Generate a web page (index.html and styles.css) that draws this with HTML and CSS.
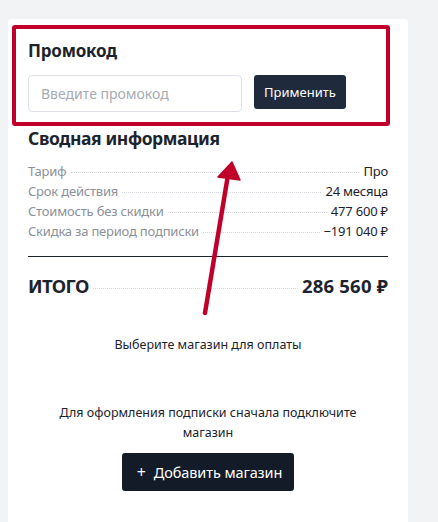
FILE: index.html
```html
<!DOCTYPE html>
<html lang="ru">
<head>
<meta charset="utf-8">
<link rel="stylesheet" href="styles.css">
</head>
<body>
<div class="card">
  <section class="promo">
    <h2 class="promo-title">Промокод</h2>
    <div class="promo-row">
      <input class="promo-input" type="text" placeholder="Введите промокод">
      <button class="btn btn-apply">Применить</button>
    </div>
  </section>

  <h2 class="summary-title">Сводная информация</h2>
  <div class="rows">
    <div class="row"><span class="label">Тариф</span><span class="dots"></span><span class="value">Про</span></div>
    <div class="row"><span class="label">Срок действия</span><span class="dots"></span><span class="value">24 месяца</span></div>
    <div class="row"><span class="label">Стоимость без скидки</span><span class="dots"></span><span class="value">477 600 ₽</span></div>
    <div class="row"><span class="label">Скидка за период подписки</span><span class="dots"></span><span class="value">−191 040 ₽</span></div>
  </div>
  <div class="total">
    <span class="total-label">ИТОГО</span><span class="dots"></span><span class="total-value">286 560 ₽</span>
  </div>

  <p class="choose">Выберите магазин для оплаты</p>
  <p class="hint">Для оформления подписки сначала подключите магазин</p>
  <div class="add-wrap">
    <button class="btn btn-add"><span class="plus">+</span>Добавить магазин</button>
  </div>

  <svg class="arrow" width="60" height="180" viewBox="0 0 60 180">
    <line x1="11" y1="172" x2="34" y2="34" stroke="#c0002a" stroke-width="4.5" stroke-linecap="round"/>
    <polygon points="38,21 24,36 46,39" fill="#c0002a" stroke="#c0002a" stroke-width="1.5" stroke-linejoin="round"/>
  </svg>
</div>
</body>
</html>
```

FILE: styles.css
```css
html, body {
  margin: 0;
  padding: 0;
}
body {
  background: #f2f3f5;
  font-family: "Noto Sans", "Open Sans", sans-serif;
  color: #1d232d;
  height: 522px;
  overflow: hidden;
}
.card {
  position: relative;
  margin: 19px 0 0 8px;
  width: 400px;
  min-height: 520px;
  box-sizing: border-box;
  background: #fff;
  border-radius: 3px;
  padding: 6px 20px 20px 20px;
}
.promo {
  margin: 0 -2px 0 -16px;
  border: 4px solid #c0002a;
  border-radius: 3px;
  padding: 10px 12px 10px 12px;
}
.promo-title {
  margin: 0;
  font-size: 17px;
  line-height: 24px;
  font-weight: 700;
  letter-spacing: -0.2px;
  color: #1d232d;
}
.promo-row {
  display: flex;
  align-items: flex-start;
  gap: 12px;
  margin-top: 12px;
}
.promo-input {
  width: 214px;
  height: 37px;
  box-sizing: border-box;
  border: 1px solid #dde1e7;
  border-radius: 4px;
  padding: 0 12px;
  font-family: inherit;
  font-size: 14px;
  color: #1d232d;
  outline: none;
}
.promo-input::placeholder {
  color: #a6abb3;
}
.btn {
  border: none;
  font-family: inherit;
  color: #fff;
  cursor: pointer;
}
.btn-apply {
  height: 34px;
  width: 92px;
  padding: 0;
  background: #1f2a3c;
  border-radius: 3px;
  font-size: 13px;
}
.summary-title {
  margin: 0;
  font-size: 17.5px;
  line-height: 24px;
  font-weight: 700;
  letter-spacing: -0.4px;
  color: #1d232d;
}
.rows {
  margin-top: 11px;
  display: flex;
  flex-direction: column;
}
.row {
  display: flex;
  align-items: baseline;
  height: 20px;
  font-size: 13px;
  line-height: 20px;
  letter-spacing: -0.2px;
}
.label {
  color: #8c9099;
}
.value {
  color: #1d232d;
}
.dots {
  flex: 1;
  margin: 0 4px;
  border-bottom: 1px dotted #d3d6db;
  position: relative;
  top: -3px;
}
.total {
  margin-top: 15px;
  border-top: 1px solid #1d232d;
  padding-top: 17px;
  display: flex;
  align-items: baseline;
  font-size: 18.5px;
  font-weight: 700;
  line-height: 24px;
}
.total-label {
  letter-spacing: -0.6px;
}
.total-value {
  letter-spacing: 0.2px;
}
.total .dots {
  top: -4px;
}
.choose {
  margin: 38px 0 0;
  text-align: center;
  font-size: 12.5px;
  line-height: 18px;
  color: #1d232d;
}
.hint {
  margin: 49px auto 0;
  width: 310px;
  text-align: center;
  font-size: 12.5px;
  line-height: 20px;
  color: #1d232d;
}
.add-wrap {
  display: flex;
  justify-content: center;
  margin-top: 10px;
}
.btn-add {
  height: 38px;
  padding: 0 12px 0 15px;
  background: #131a28;
  border-radius: 3px;
  font-size: 14.5px;
  letter-spacing: -0.1px;
  display: flex;
  align-items: center;
}
.plus {
  margin-right: 8px;
  font-size: 16px;
}
.arrow {
  position: absolute;
  left: 186px;
  top: 122px;
  pointer-events: none;
}
```
